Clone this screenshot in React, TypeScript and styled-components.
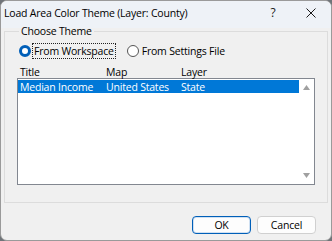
import React from "react";
import styled, { createGlobalStyle } from "styled-components";

const GlobalStyle = createGlobalStyle`
  html, body {
    margin: 0;
    padding: 0;
    background: #6f7479;
  }
  body {
    font-family: "Segoe UI", "Open Sans", "Noto Sans", sans-serif;
    font-size: 10.5px;
    line-height: 14px;
    letter-spacing: -0.2px;
    color: #000;
  }
`;

const Window = styled.div`
  width: 332px;
  height: 241px;
  box-sizing: border-box;
  border: 1px solid #9a9a9a;
  border-radius: 7px;
  background: #f0f0f0;
  display: flex;
  flex-direction: column;
  overflow: hidden;
`;

const TitleBar = styled.div`
  height: 27px;
  display: flex;
  align-items: center;
  padding-left: 3px;
  background: #eef2f7;
  flex-shrink: 0;
`;

const Title = styled.div`
  flex: 1;
  margin-top: -3px;
`;

const CaptionButton = styled.div<{ $w: number }>`
  width: ${({ $w }) => $w}px;
  display: flex;
  justify-content: center;
  margin-top: -3px;
  font-size: 12px;
  color: #1a1a1a;
`;

const Body = styled.div`
  flex: 1;
  display: flex;
  flex-direction: column;
  padding: 0 3px 0 3px;
`;

const GroupBox = styled.fieldset`
  margin: -5px 0 0 0;
  padding: 2px 12px 14px 12px;
  border: 1px solid #dcdcdc;
  border-radius: 0;
  height: 180px;
  box-sizing: border-box;
`;

const Legend = styled.legend`
  padding: 0 2px;
  margin-left: 2px;
  line-height: 16px;
`;

const RadioRow = styled.div`
  display: flex;
  align-items: center;
  gap: 12px;
  padding-left: 2px;
  height: 20px;
`;

const RadioOption = styled.div`
  display: flex;
  align-items: center;
  gap: 2px;
`;

const RadioCircle = styled.span<{ $checked?: boolean }>`
  width: 12px;
  height: 12px;
  box-sizing: border-box;
  border-radius: 50%;
  border: ${({ $checked }) => ($checked ? "3.5px solid #005fb8" : "1px solid #555")};
  background: #fff;
  flex-shrink: 0;
`;

const RadioLabel = styled.span<{ $focus?: boolean }>`
  padding: 0 1px;
  outline: ${({ $focus }) => ($focus ? "1px dotted #222" : "none")};
`;

const Columns = styled.div`
  display: grid;
  grid-template-columns: 86px 75px 1fr;
  padding-left: 3px;
  margin-top: 4px;
  height: 13px;
  align-items: center;
`;

const ListBox = styled.div`
  height: 107px;
  box-sizing: border-box;
  border: 1px solid #828790;
  background: #fff;
  display: flex;
`;

const Rows = styled.div`
  flex: 1;
  padding-top: 1px;
`;

const Row = styled.div<{ $selected?: boolean }>`
  display: grid;
  grid-template-columns: 86px 75px 1fr;
  height: 13px;
  align-items: center;
  padding-left: 2px;
  background: ${({ $selected }) => ($selected ? "#0078d7" : "transparent")};
  color: ${({ $selected }) => ($selected ? "#fff" : "#000")};
`;

const ScrollBar = styled.div`
  width: 15px;
  display: flex;
  flex-direction: column;
  justify-content: space-between;
  align-items: center;
  padding: 6px 0 6px;
`;

const Footer = styled.div`
  flex: 1;
  display: flex;
  justify-content: flex-end;
  align-items: flex-start;
  gap: 6px;
  padding-top: 13px;
  padding-right: 12px;
`;

const Button = styled.button<{ $default?: boolean }>`
  width: 59px;
  height: 18px;
  box-sizing: border-box;
  border-radius: 4px;
  border: 1px solid ${({ $default }) => ($default ? "#005fb8" : "#d0d0d0")};
  box-shadow: ${({ $default }) => ($default ? "inset 0 0 0 1px #cfe0f2" : "none")};
  background: #fdfdfd;
  font-family: inherit;
  font-size: 10.5px;
  letter-spacing: inherit;
  color: #000;
  padding: 0;
`;

const Arrow = ({ up }: { up?: boolean }) => (
  <svg width="7" height="5" viewBox="0 0 7 5">
    <path d={up ? "M0 5 L3.5 0 L7 5 Z" : "M0 0 L3.5 5 L7 0 Z"} fill="#a0a0a0" />
  </svg>
);

export default function App() {
  return (
    <>
      <GlobalStyle />
      <Window>
        <TitleBar>
          <Title>Load Area Color Theme (Layer: County)</Title>
          <CaptionButton $w={36}>?</CaptionButton>
          <CaptionButton $w={40}>
            <svg width="10" height="10" viewBox="0 0 10 10">
              <path d="M0.5 0.5 L9.5 9.5 M9.5 0.5 L0.5 9.5" stroke="#1a1a1a" strokeWidth="1" />
            </svg>
          </CaptionButton>
        </TitleBar>
        <Body>
          <GroupBox>
            <Legend>Choose Theme</Legend>
            <RadioRow>
              <RadioOption>
                <RadioCircle $checked />
                <RadioLabel $focus>From Workspace</RadioLabel>
              </RadioOption>
              <RadioOption>
                <RadioCircle />
                <RadioLabel>From Settings File</RadioLabel>
              </RadioOption>
            </RadioRow>
            <Columns>
              <span>Title</span>
              <span>Map</span>
              <span>Layer</span>
            </Columns>
            <ListBox>
              <Rows>
                <Row $selected>
                  <span>Median Income</span>
                  <span>United States</span>
                  <span>State</span>
                </Row>
              </Rows>
              <ScrollBar>
                <Arrow up />
                <Arrow />
              </ScrollBar>
            </ListBox>
          </GroupBox>
          <Footer>
            <Button $default>OK</Button>
            <Button>Cancel</Button>
          </Footer>
        </Body>
      </Window>
    </>
  );
}
